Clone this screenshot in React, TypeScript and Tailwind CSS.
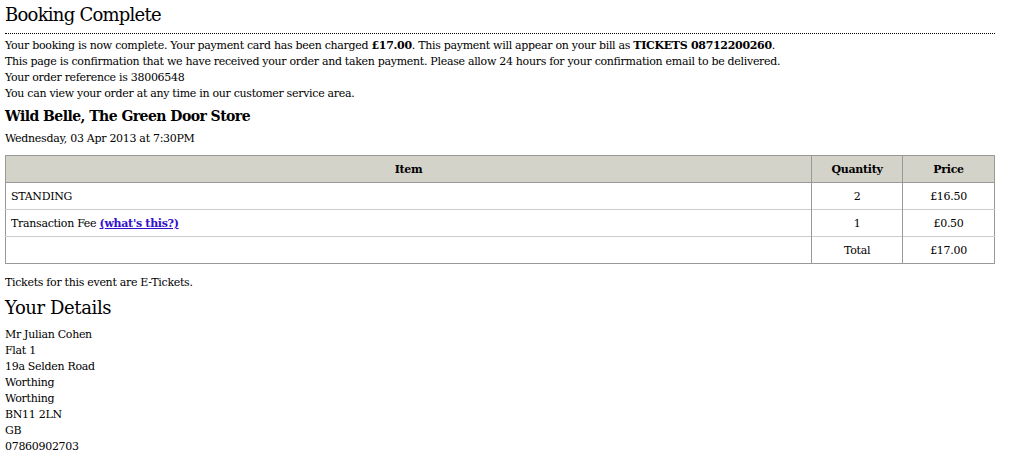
import React from "react";

export default function App() {
  const address = [
    "Mr Julian Cohen",
    "Flat 1",
    "19a Selden Road",
    "Worthing",
    "Worthing",
    "BN11 2LN",
    "GB",
    "07860902703",
  ];
  return (
    <div className="w-[1026px] h-[453px] bg-white text-black overflow-hidden font-['DejaVu_Serif',Georgia,serif]">
      <div className="ml-[5px] w-[990px] text-[11px] leading-[16px] tracking-[-0.3px]">
        <h1 className="pt-[3px] pb-[6px] text-[18px] leading-[24px] font-normal tracking-[-0.75px] border-b border-dotted border-black">
          Booking Complete
        </h1>
        <div className="mt-[4px]">
          <div>
            Your booking is now complete. Your payment card has been charged <b>£17.00</b>. This payment will
            appear on your bill as <b>TICKETS 08712200260</b>.
          </div>
          <div>
            This page is confirmation that we have received your order and taken payment. Please allow 24 hours for
            your confirmation email to be delivered.
          </div>
          <div>Your order reference is 38006548</div>
          <div>You can view your order at any time in our customer service area.</div>
        </div>
        <h2 className="mt-[4px] text-[14px] leading-[20px] font-bold tracking-[-0.55px]">
          Wild Belle, The Green Door Store
        </h2>
        <div className="mt-[5px]">Wednesday, 03 Apr 2013 at 7:30PM</div>
        <table className="mt-[8px] w-[990px] border-collapse border border-[#999]">
          <thead>
            <tr className="h-[27px] bg-[#d4d3ca]">
              <th className="w-[807px] pt-[2px] border border-[#999] font-bold text-center">Item</th>
              <th className="w-[91px] pt-[2px] border border-[#999] font-bold text-center">Quantity</th>
              <th className="w-[92px] pt-[2px] border border-[#999] font-bold text-center">Price</th>
            </tr>
          </thead>
          <tbody>
            <tr className="h-[27px] border-b border-[#ccc]">
              <td className="pl-[5px] pt-[2px] border-r border-[#999]">STANDING</td>
              <td className="text-center pt-[2px] border-r border-[#999]">2</td>
              <td className="text-center pt-[2px]">£16.50</td>
            </tr>
            <tr className="h-[27px] border-b border-[#ccc]">
              <td className="pl-[5px] pt-[2px] border-r border-[#999]">
                Transaction Fee{" "}
                <a href="#" className="font-bold underline text-[#3311cc]">
                  (what's this?)
                </a>
              </td>
              <td className="text-center pt-[2px] border-r border-[#999]">1</td>
              <td className="text-center pt-[2px]">£0.50</td>
            </tr>
            <tr className="h-[27px]">
              <td className="pl-[5px] border-r border-[#999]"></td>
              <td className="text-center pt-[2px] border-r border-[#999]">Total</td>
              <td className="text-center pt-[2px]">£17.00</td>
            </tr>
          </tbody>
        </table>
        <div className="mt-[11px]">Tickets for this event are E-Tickets.</div>
        <h2 className="mt-[5px] text-[18px] leading-[24px] font-normal tracking-[-0.4px]">Your Details</h2>
        <div className="mt-[7px]">
          {address.map((l, i) => (
            <div key={i}>{l}</div>
          ))}
        </div>
      </div>
    </div>
  );
}
